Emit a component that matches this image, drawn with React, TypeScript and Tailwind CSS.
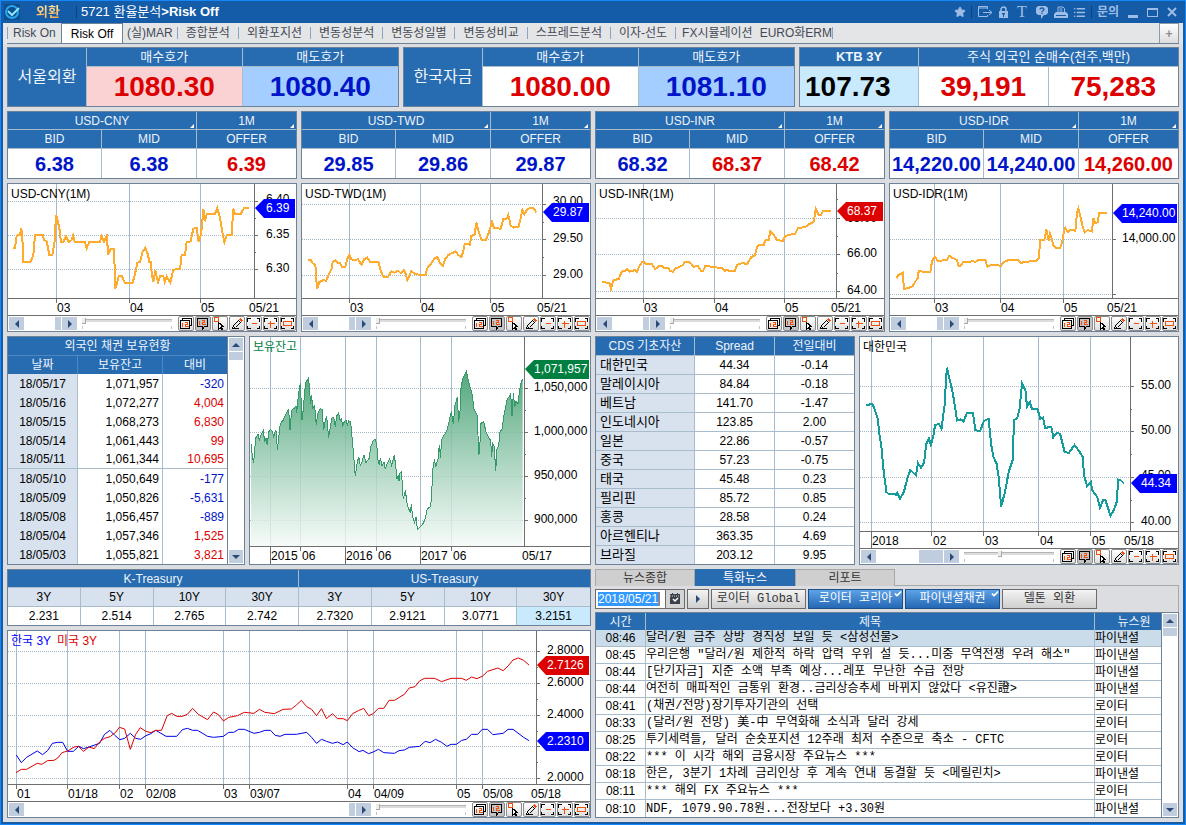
import { ReactNode } from "react";
import clsx from "clsx";
import { Check, List, Star } from "lucide-react";

type Tone = "up" | "down" | "flat";

type Tag = { text: string; y: number; color: string };

type ChartProps = {
  width: number;
  height: number;
  axisX: number;
  axisY: number;
  vLines: number[];
  yearLines?: number[];
  hLines: number[];
  minor?: number[];
  labelX: number;
  yLabels: [string, number][];
  xLabels: [string, number][];
  tags: Tag[];
  label: string;
  children: ReactNode;
};

const toneText = {
  up: "text-[#dc0000]",
  down: "text-[#0014c8]",
  flat: "text-black",
};

const menuTabs = [
  "(실)MAR",
  "종합분석",
  "외환포지션",
  "변동성분석",
  "변동성일별",
  "변동성비교",
  "스프레드분석",
  "이자-선도",
];

const quotes: { pair: string; cells: [string, Tone][] }[] = [
  { pair: "USD-CNY", cells: [["6.38", "down"], ["6.38", "down"], ["6.39", "up"]] },
  { pair: "USD-TWD", cells: [["29.85", "down"], ["29.86", "down"], ["29.87", "down"]] },
  { pair: "USD-INR", cells: [["68.32", "down"], ["68.37", "up"], ["68.42", "up"]] },
  { pair: "USD-IDR", cells: [["14,220.00", "down"], ["14,240.00", "down"], ["14,260.00", "up"]] },
];

const fxCharts = [
  {
    name: "USD-CNY(1M)",
    shift: 8,
    axisX: 246,
    vLines: [48, 121, 192],
    hLines: [17, 51, 85],
    minor: [34, 68],
    labelX: 258,
    yLabels: [["6.40", 15], ["6.35", 50], ["6.30", 84]] as [string, number][],
    tag: { text: "6.39", y: 24, color: "#0000ff" },
    points:
      "40,421 45,421 50,383 60,380 64,362 67,380 69,461 92,461 100,440 105,381 128,381 133,397 140,400 148,440 157,440 164,400 168,320 172,335 178,360 183,402 190,402 198,384 206,402 214,397 219,382 224,402 255,402 260,420 268,402 300,402 304,384 312,400 320,384 325,440 332,422 342,422 346,543 356,505 366,505 374,524 398,524 405,498 412,464 420,462 428,430 436,420 444,440 448,462 453,462 455,495 460,522 466,488 474,522 480,505 490,505 494,522 500,505 511,524 520,485 540,483 545,441 555,441 560,402 572,400 580,362 590,360 596,402 602,382 606,355 610,302 615,340 620,318 645,318 652,300 660,330 668,378 673,402 680,382 695,380 700,302 706,318 722,318 732,300 747,300",
  },
  {
    name: "USD-TWD(1M)",
    shift: 6,
    axisX: 240,
    vLines: [47, 118, 188],
    hLines: [20, 55, 91],
    minor: [38, 73],
    labelX: 251,
    yLabels: [["30.00", 17], ["29.50", 54], ["29.00", 90]] as [string, number][],
    tag: { text: "29.87", y: 28, color: "#0000ff" },
    points:
      "36,456 44,456 50,466 58,470 60,500 63,543 70,522 82,516 90,519 98,500 106,485 110,462 118,458 124,464 132,464 138,477 148,477 154,452 160,440 166,454 175,457 186,454 196,470 205,453 214,449 222,461 248,463 254,488 262,506 276,506 286,490 296,494 306,488 314,495 324,486 330,500 334,516 346,489 358,499 388,501 395,478 405,467 415,452 424,447 432,465 440,474 448,452 456,442 464,437 470,435 478,430 486,440 496,447 502,430 506,408 522,410 526,384 536,380 541,344 548,370 556,395 570,396 578,375 588,342 594,360 614,362 622,333 632,332 637,321 644,352 652,359 668,356 674,330 679,306 685,318 695,303 708,299 714,303 721,313",
  },
  {
    name: "USD-INR(1M)",
    shift: 4,
    axisX: 240,
    vLines: [47, 118, 188],
    hLines: [34, 70, 107],
    minor: [15, 52, 89],
    labelX: 251,
    yLabels: [["68.00", 34], ["66.00", 69], ["64.00", 106]] as [string, number][],
    tag: { text: "68.37", y: 27, color: "#dc0000" },
    points:
      "30,522 52,525 57,542 64,517 80,513 86,498 92,489 100,489 105,483 112,491 122,489 128,485 135,491 142,475 150,463 156,461 162,467 180,469 190,483 200,475 210,473 218,481 228,479 235,490 243,491 250,481 262,477 272,471 280,461 290,461 298,467 305,476 318,474 328,490 334,488 340,474 366,477 390,481 398,489 405,485 412,489 428,489 436,470 448,466 466,467 478,447 488,443 496,415 502,410 515,411 520,397 530,396 535,369 545,380 555,396 572,399 580,384 595,380 610,377 618,360 640,357 652,348 664,343 668,325 671,302 680,321 688,320 693,309 716,309",
  },
  {
    name: "USD-IDR(1M)",
    shift: 4,
    axisX: 222,
    vLines: [44, 110, 173],
    hLines: [55, 110],
    minor: [],
    labelX: 232,
    yLabels: [["14,000.00", 54]] as [string, number][],
    tag: { text: "14,240.00", y: 29, color: "#0000ff" },
    points:
      "32,511 36,502 50,495 54,543 66,540 80,535 88,520 95,512 98,490 104,488 110,492 133,492 138,460 146,446 155,458 182,457 190,443 198,449 213,456 218,474 224,473 232,462 262,460 268,462 276,457 298,456 304,476 316,471 345,473 352,463 368,456 395,456 404,465 420,461 440,460 450,458 458,450 463,397 475,395 481,365 488,398 492,378 498,395 502,411 510,420 522,420 528,405 534,370 538,359 545,372 552,366 568,368 573,315 577,302 583,325 590,355 596,374 605,366 618,370 622,330 628,345 635,343 640,314 662,314",
  },
];

const holdings: [string, string, string][] = [
  ["18/05/17", "1,071,957", "-320"],
  ["18/05/16", "1,072,277", "4,004"],
  ["18/05/15", "1,068,273", "6,830"],
  ["18/05/14", "1,061,443", "99"],
  ["18/05/11", "1,061,344", "10,695"],
  ["18/05/10", "1,050,649", "-177"],
  ["18/05/09", "1,050,826", "-5,631"],
  ["18/05/08", "1,056,457", "-889"],
  ["18/05/04", "1,057,346", "1,525"],
  ["18/05/03", "1,055,821", "3,821"],
];

const holdingPoints =
  "33,336 38,380 41,392 47,318 54,306 58,325 62,312 70,296 74,330 78,318 82,340 86,300 92,292 98,300 101,318 106,295 109,298 112,355 118,300 121,275 130,264 138,245 146,232 150,295 155,235 163,228 168,222 170,243 175,190 181,153 186,265 190,230 194,180 197,152 206,137 209,180 212,215 215,190 218,228 224,222 229,280 233,245 240,230 246,232 251,295 256,265 260,253 266,317 270,290 276,258 281,256 286,285 290,252 296,243 301,268 304,258 308,280 314,268 318,265 322,280 326,267 332,270 338,335 342,385 346,433 350,400 356,374 361,400 366,390 372,368 378,392 387,380 392,345 400,325 405,321 410,335 414,385 418,400 421,378 426,403 432,390 436,412 440,398 449,380 455,400 463,370 467,400 471,440 475,430 477,446 480,422 485,418 487,470 490,502 496,475 502,520 508,535 511,540 514,517 518,555 524,572 528,555 532,592 541,585 550,573 556,560 562,530 570,525 574,505 578,420 580,395 584,385 587,405 594,380 598,340 602,378 604,325 612,310 620,298 628,265 634,238 640,275 645,220 652,196 656,270 660,240 663,170 668,140 679,118 686,150 690,165 696,185 702,230 712,250 716,368 719,360 722,275 731,268 738,300 745,315 752,325 755,375 758,335 763,345 767,418 771,352 776,340 780,300 787,290 790,260 795,235 802,200 808,193 812,183 816,253 820,183 824,225 828,208 834,215 838,180 843,152 848,141";

const cds: [string, string, string][] = [
  ["대한민국", "44.34", "-0.14"],
  ["말레이시아", "84.84", "-0.18"],
  ["베트남", "141.70", "-1.47"],
  ["인도네시아", "123.85", "2.00"],
  ["일본", "22.86", "-0.57"],
  ["중국", "57.23", "-0.75"],
  ["태국", "45.48", "0.23"],
  ["필리핀", "85.72", "0.85"],
  ["홍콩", "28.58", "0.24"],
  ["아르헨티나", "363.35", "4.69"],
  ["브라질", "203.12", "9.95"],
];

const cdsPoints =
  "726,219 733,219 738,216 744,217 750,235 757,260 762,310 767,345 773,420 780,480 785,485 805,488 808,482 816,500 826,480 835,440 843,414 858,430 863,393 871,407 879,393 885,335 892,320 897,338 903,315 908,280 918,275 925,290 933,220 939,107 946,140 955,185 966,265 975,262 983,268 992,242 1008,243 1014,295 1027,297 1036,268 1049,260 1056,340 1062,375 1070,395 1076,440 1082,524 1092,480 1102,420 1112,385 1116,265 1124,258 1130,235 1137,155 1146,175 1150,224 1158,210 1163,231 1178,232 1185,260 1192,257 1198,288 1214,284 1219,316 1228,303 1237,305 1249,360 1260,363 1275,339 1287,357 1297,375 1300,430 1308,462 1318,450 1322,475 1335,495 1342,528 1350,505 1356,503 1370,552 1380,530 1386,510 1390,443 1398,446 1405,454";

const treasury: [string, string][] = [
  ["3Y", "2.231"],
  ["5Y", "2.514"],
  ["10Y", "2.765"],
  ["30Y", "2.742"],
  ["3Y", "2.7320"],
  ["5Y", "2.9121"],
  ["10Y", "3.0771"],
  ["30Y", "3.2151"],
];

const usPoints =
  "42,620 56,610 70,610 98,592 110,595 125,584 142,583 152,576 163,560 178,555 195,543 206,541 220,556 234,543 248,548 262,528 275,517 290,512 305,498 314,484 328,489 343,550 357,505 369,485 384,496 397,500 410,493 425,493 440,449 452,442 465,451 480,451 493,445 507,427 522,445 546,461 562,438 575,446 588,465 602,454 625,449 643,439 668,442 683,430 697,439 722,443 745,430 767,429 780,417 793,403 807,422 820,430 833,449 846,428 859,458 875,443 888,458 903,458 914,464 928,443 943,434 957,427 970,449 982,443 996,427 1010,427 1024,403 1038,403 1064,385 1077,366 1092,362 1104,345 1117,337 1144,337 1162,347 1187,337 1215,337 1227,343 1241,333 1255,338 1269,331 1283,316 1310,306 1324,314 1337,300 1350,282 1364,276 1378,283 1392,297";

const krPoints =
  "43,567 56,590 70,574 98,555 112,566 125,554 138,532 152,529 165,529 178,556 193,556 207,541 220,548 234,543 262,532 275,505 289,493 302,508 315,521 328,517 343,502 357,517 370,520 384,509 397,503 410,493 437,511 465,511 480,491 493,487 507,493 520,493 546,511 562,514 588,511 602,499 615,499 628,490 643,490 668,502 683,499 697,493 712,493 724,508 737,511 750,505 780,505 807,499 820,514 833,532 846,520 859,526 875,532 888,528 903,536 914,528 928,545 945,557 955,553 970,563 982,558 996,550 1010,560 1038,562 1050,554 1064,552 1077,544 1104,541 1119,526 1132,530 1146,520 1162,529 1176,541 1187,535 1201,535 1215,523 1227,520 1241,505 1257,505 1269,490 1283,490 1297,506 1324,502 1337,490 1350,490 1378,514 1392,524";

const news: [string, string, string][] = [
  ["08:46", "달러/원 금주 상방 경직성 보일 듯 <삼성선물>", "파이낸셜"],
  ["08:45", '우리은행 "달러/원 제한적 하락 압력 우위 설 듯...미중 무역전쟁 우려 해소"', "파이낸셜"],
  ["08:44", "[단기자금] 지준 소액 부족 예상...레포 무난한 수급 전망", "파이낸셜"],
  ["08:44", "여전히 매파적인 금통위 환경..금리상승추세 바뀌지 않았다 <유진證>", "파이낸셜"],
  ["08:41", "(채권/전망)장기투자기관의 선택", "로이터"],
  ["08:33", "(달러/원 전망) 美-中 무역화해 소식과 달러 강세", "로이터"],
  ["08:25", "투기세력들, 달러 순숏포지션 12주래 최저 수준으로 축소 - CFTC", "로이터"],
  ["08:22", "*** 이 시각 해외 금융시장 주요뉴스 ***", "로이터"],
  ["08:18", "한은, 3분기 1차례 금리인상 후 계속 연내 동결할 듯 <메릴린치>", "파이낸셜"],
  ["08:11", "*** 해외 FX 주요뉴스 ***", "로이터"],
  ["08:10", "NDF, 1079.90.78원...전장보다 +3.30원", "파이낸셜"],
];

function Panel({ children }: { children: ReactNode }) {
  return (
    <section className="min-w-0 border border-[#6c8298] bg-white">{children}</section>
  );
}

function Chart(props: ChartProps) {
  const { width, height, axisX, axisY, labelX } = props;

  return (
    <svg
      viewBox={`0 0 ${width} ${height}`}
      className="block w-full"
      role="img"
      aria-label={props.label}
      fontSize={12}
      fill="#000"
    >
      <g stroke="#a6b9ca" shapeRendering="crispEdges">
        {props.hLines.map((y) => (
          <line key={y} x1={0} x2={axisX} y1={y + 0.5} y2={y + 0.5} strokeDasharray="1 1" />
        ))}
        {props.vLines.map((x) => (
          <line key={x} x1={x + 0.5} x2={x + 0.5} y1={0} y2={axisY} />
        ))}
      </g>

      {props.children}

      <g stroke="#6e6e6e" shapeRendering="crispEdges">
        <line x1={axisX + 0.5} x2={axisX + 0.5} y1={0} y2={axisY} />
        <line x1={0} x2={width} y1={axisY + 0.5} y2={axisY + 0.5} />
        {props.hLines.map((y) => (
          <line key={y} x1={axisX} x2={axisX + 4} y1={y + 0.5} y2={y + 0.5} />
        ))}
        {props.minor?.map((y) => (
          <line key={y} x1={axisX} x2={axisX + 2} y1={y + 0.5} y2={y + 0.5} />
        ))}
        {props.vLines.map((x) => (
          <line key={x} x1={x + 0.5} x2={x + 0.5} y1={axisY} y2={axisY + 5} />
        ))}
        {props.yearLines?.map((x) => (
          <line key={x} x1={x + 0.5} x2={x + 0.5} y1={axisY} y2={height} />
        ))}
      </g>

      {props.yLabels.map(([text, y]) => (
        <text key={text} x={labelX} y={y + 4}>
          {text}
        </text>
      ))}
      {props.xLabels.map(([text, x]) => (
        <text key={x} x={x} y={axisY + 14}>
          {text}
        </text>
      ))}
      {props.tags.map((tag) => (
        <g key={tag.text}>
          <polygon
            fill={tag.color}
            points={`${axisX + 1},${tag.y} ${axisX + 10},${tag.y - 9} ${width - 1},${tag.y - 9} ${width - 1},${tag.y + 10} ${axisX + 10},${tag.y + 10}`}
          />
          <text x={labelX} y={tag.y + 4} fill="#fff">
            {tag.text}
          </text>
        </g>
      ))}
    </svg>
  );
}

const corners = "M0 4V1h3M9 1h3v3M12 8v3H9M3 11H0V8";

const tools = [
  {
    name: "겹쳐보기",
    icon: (
      <>
        <path d="M3 3V1h9v7h-2" stroke="#000" />
        <path d="M1 3h9v8H1z" stroke="#000" />
        <path d="M3 5v4M5 5h3v2H6v2h3" stroke="#f0500a" />
      </>
    ),
  },
  {
    name: "값 표시",
    icon: (
      <>
        <path d="M1 1h10v8H8l-2 3v-3H1z" stroke="#000" />
        <path d="M3 3v4M5 3h3v2H6v2h3" stroke="#f0500a" />
      </>
    ),
  },
  {
    name: "선택",
    icon: (
      <>
        <path d="M1 0h4v4H1z" stroke="#f0500a" />
        <path d="M5 5v7l2-2 1 2h1l-1-3h2z" fill="#fff" stroke="#000" />
      </>
    ),
  },
  {
    name: "그리기",
    icon: (
      <>
        <path d="M3 8l5-5 2 2-5 5-3 1zM1 11h7" stroke="#000" />
        <path d="M9 2l1-1 2 2-1 1z" fill="#f0500a" stroke="#f0500a" />
      </>
    ),
  },
  {
    name: "축소",
    icon: (
      <>
        <path d={corners} stroke="#000" />
        <path d="M4 6h5" stroke="#f0500a" />
      </>
    ),
  },
  {
    name: "확대",
    icon: (
      <>
        <path d={corners} stroke="#000" />
        <path d="M3 6h7M6 3v7" stroke="#f0500a" />
      </>
    ),
  },
  {
    name: "전체",
    icon: (
      <>
        <path d={corners} stroke="#000" />
        <path d="M2 4h8v4H2z" stroke="#f0500a" />
      </>
    ),
  },
];

function Arrow({ d }: { d: string }) {
  return (
    <svg viewBox="0 0 8 8" className="h-2 w-2">
      <path d={d} fill="#2c4a78" />
    </svg>
  );
}

const scrollBox = "flex shrink-0 items-center justify-center bg-[#c0cddf]";

function ChartToolbar({ wide, zoom = 0 }: { wide?: boolean; zoom?: number }) {
  return (
    <div className="flex h-4 items-center border-t border-[#6e6e6e] bg-white pl-px">
      <div className="flex flex-1 gap-px">
        <button aria-label="이전" className={clsx(scrollBox, "h-[13px] w-[15px]")}>
          <Arrow d="M6 0v8L2 4z" />
        </button>
        <div className={clsx("ml-auto bg-[#c0cddf]", wide ? "w-6" : "w-[6px]")} />
        <button aria-label="다음" className={clsx(scrollBox, "h-[13px] w-[15px]")}>
          <Arrow d="M2 0v8l4-4z" />
        </button>
      </div>
      <div className="ml-[5px] flex w-[90px] flex-col gap-1">
        <input
          type="range"
          aria-label="차트 배율"
          defaultValue={zoom}
          className="h-[3px] w-full appearance-none border-t border-[#b4b4b4] bg-[#dcdcdc] [&::-webkit-slider-thumb]:h-[6px] [&::-webkit-slider-thumb]:w-1 [&::-webkit-slider-thumb]:appearance-none [&::-webkit-slider-thumb]:border-r [&::-webkit-slider-thumb]:border-b [&::-webkit-slider-thumb]:border-[#a8a8a8] [&::-webkit-slider-thumb]:bg-[#ececec]"
        />
        <div className="h-[3px] border-x border-[#c4c4c4]" />
      </div>
      <div className="ml-[6px] flex gap-px">
        {tools.map((tool, i) => (
          <button
            key={tool.name}
            aria-label={tool.name}
            className={clsx(
              "flex h-[15px] w-4 items-center justify-center rounded-xs border border-[#8c8c8c]",
              i === 1 ? "bg-[#c4c4c4]" : "bg-linear-to-b from-white to-[#dedede]"
            )}
          >
            <svg
              viewBox="-0.5 -0.5 14 13"
              className="h-[13px] w-[14px]"
              fill="none"
              shapeRendering="crispEdges"
            >
              {tool.icon}
            </svg>
          </button>
        ))}
      </div>
    </div>
  );
}

function VerticalScroll() {
  return (
    <div className="flex w-[17px] shrink-0 flex-col gap-px border-l border-[#6c8298] bg-white p-px">
      <button aria-label="위로" className={clsx(scrollBox, "h-[13px]")}>
        <Arrow d="M0 6h8L4 2z" />
      </button>
      <div className="h-2 bg-[#c0cddf]" />
      <button aria-label="아래로" className={clsx(scrollBox, "mt-auto h-[13px]")}>
        <Arrow d="M0 2h8L4 6z" />
      </button>
    </div>
  );
}

function TitleBar() {
  return (
    <header className="flex h-[22px] items-center bg-[#145ca8] px-px text-white">
      <svg viewBox="0 0 16 16" className="h-4 w-4">
        <rect width="16" height="16" fill="#0a4f8f" />
        <circle cx="8" cy="8" r="6" fill="none" stroke="#2ba4ec" strokeWidth="2" />
        <path d="M4 7l4 4 7-7" fill="none" stroke="#8fe6ff" strokeWidth="2" />
      </svg>
      <span className="ml-4 bg-linear-to-b from-[#fff0a8] to-[#ff9c38] bg-clip-text text-[13px] font-bold text-transparent">
        외환
      </span>
      <span className="ml-4 h-3 w-px bg-[#0c3f7c]" />
      <h1 className="ml-1 text-[13px]">
        5721 환율분석<b>&gt;Risk Off</b>
      </h1>
      <div className="mr-[5px] ml-auto flex items-center gap-[5px] text-[#9dbce6]">
        <button aria-label="즐겨찾기">
          <Star size={12} fill="currentColor" />
        </button>
        <span className="h-3 w-px bg-[#0c3f7c]" />
        <button aria-label="내보내기">
          <svg viewBox="0 0 16 12" className="h-3 w-4" fill="none" stroke="currentColor">
            <path d="M10.5 3V.5h-9v10h9V9M1.5 2h9M6 6.5h8M12 4l3 2.5L12 9" />
          </svg>
        </button>
        <button aria-label="잠금">
          <svg viewBox="0 0 11 12" className="h-3 w-[11px]">
            <path d="M3 6V3.500a2.500 2.500 0 015 0V6" fill="none" stroke="currentColor" strokeWidth="1.500" />
            <rect x="1" y="5" width="9" height="7" fill="currentColor" />
            <path d="M4 7h3v1.500H6V11H5V8.500H4z" fill="#145ca8" />
          </svg>
        </button>
        <button className="w-4 font-[Liberation_Serif,serif] text-[16px] leading-4">T</button>
        <button aria-label="도움말">
          <svg viewBox="0 0 14 13" className="h-[13px] w-[14px]">
            <path d="M3 0h8l2 2v5l-2 2H9l-3 4V9H3L1 7V2z" fill="currentColor" />
            <path d="M5 3.500C5 1.500 9 1.500 9 3.500 9 4.500 7 4.500 7 6M7 6.800V8" fill="none" stroke="#145ca8" strokeWidth="1.300" />
          </svg>
        </button>
        <button aria-label="인쇄">
          <svg viewBox="0 0 14 13" className="h-[13px] w-[14px]">
            <path d="M4 6V1h5l1.500 1.500V6" fill="none" stroke="currentColor" />
            <path d="M5.500 3h3M5.500 5h3" stroke="currentColor" />
            <path d="M2 6h10l2 2v4H0V8z" fill="currentColor" />
            <path d="M2 9.500h10" stroke="#145ca8" />
          </svg>
        </button>
        <button aria-label="목록">
          <List size={13} strokeWidth={3} />
        </button>
        <span className="h-3 w-px bg-[#0c3f7c]" />
        <button className="text-[12px] font-bold">문의</button>
        <button aria-label="최소화" className="ml-1 flex h-3 w-[10px] items-end">
          <span className="h-[3px] w-full bg-current" />
        </button>
        <button
          aria-label="최대화"
          className="ml-1 h-[9px] w-[11px] border border-t-2 border-current"
        />
        <button aria-label="닫기" className="ml-1">
          <svg viewBox="0 0 10 10" className="h-[10px] w-[10px]">
            <path d="M1 1l8 8M9 1l-8 8" stroke="currentColor" strokeWidth="2" />
          </svg>
        </button>
      </div>
    </header>
  );
}

function MenuTabs() {
  return (
    <nav className="mx-1 flex h-[21px] items-center border-b border-[#6c8298] text-[12px] text-[#444a55]">
      <button className="w-[54px] border-l border-[#8ea2c4] pl-[5px] text-left leading-3">
        Risk On
      </button>
      <button className="h-full w-[62px] border border-b-0 border-[#6c8298] bg-white text-black">
        Risk Off
      </button>
      {menuTabs.map((tab, i) => (
        <button
          key={tab}
          className={clsx(
            "border-r border-[#8ea2c4] leading-3 whitespace-nowrap",
            i === 0 ? "px-1" : "px-2"
          )}
        >
          {tab}
        </button>
      ))}
      <button className="pl-[6px] leading-3 whitespace-nowrap">FX시뮬레이션</button>
      <button className="border-r border-[#8ea2c4] pl-[7px] leading-3 whitespace-nowrap">
        EURO화ERM
      </button>
      <button className="ml-auto h-full w-5 border border-b-0 border-[#8c9aa8] bg-linear-to-b from-white to-[#dcdcdc] font-bold text-[#8c8c8c]">
        +
      </button>
    </nav>
  );
}

const headCell = "border-[#a8bccc] bg-[#276bb1] font-normal text-[#eef4fb]";

function SpotPanel({ name, bid, ask, tint }: { name: string; bid: string; ask: string; tint?: boolean }) {
  return (
    <Panel>
      <table className="w-full table-fixed border-separate border-spacing-0 text-center">
        <colgroup>
          <col className="w-[79px]" />
          <col />
          <col />
        </colgroup>
        <tbody>
          <tr>
            <th rowSpan={2} className={clsx(headCell, "border-r text-[16px]")}>
              {name}
            </th>
            <th className={clsx(headCell, "h-[19px] border-r border-b text-[13px] leading-4")}>
              매수호가
            </th>
            <th className={clsx(headCell, "h-[19px] border-b text-[13px] leading-4")}>매도호가</th>
          </tr>
          <tr className="text-[28px] leading-8 font-bold">
            <td
              className={clsx(
                "h-[39px] border-r border-[#a8bccc] text-[#dc0000]",
                tint && "bg-[#fad2d4]"
              )}
            >
              {bid}
            </td>
            <td className="bg-[#a3ceff] text-[#0014c8]">{ask}</td>
          </tr>
        </tbody>
      </table>
    </Panel>
  );
}

function StockPanel() {
  return (
    <Panel>
      <table className="w-full table-fixed border-separate border-spacing-0 text-center">
        <colgroup>
          <col className="w-[119px]" />
          <col />
          <col />
        </colgroup>
        <thead>
          <tr className="text-[13px] leading-4">
            <th className={clsx(headCell, "h-[19px] border-r border-b")}>
              <b>KTB 3Y</b>
            </th>
            <th colSpan={2} className={clsx(headCell, "border-b")}>
              주식 외국인 순매수(천주,백만)
            </th>
          </tr>
        </thead>
        <tbody>
          <tr className="text-[28px] leading-8 font-bold text-[#dc0000]">
            <td className="h-[39px] border-r border-[#a8bccc] bg-[#c8eafc] pl-[5px] text-left text-black">
              107.73
            </td>
            <td className="border-r border-[#a8bccc]">39,191</td>
            <td>75,283</td>
          </tr>
        </tbody>
      </table>
    </Panel>
  );
}

function PickerCell({ label, value }: { label: string; value: string }) {
  return (
    <div className="relative">
      <select
        aria-label={label}
        className="block h-[17px] w-full appearance-none text-center leading-4"
        defaultValue={value}
      >
        <option>{value}</option>
      </select>
      <svg viewBox="0 0 4 4" className="pointer-events-none absolute right-[2px] bottom-px h-1 w-1">
        <path d="M4 0v4H0z" fill="#fff" />
      </svg>
    </div>
  );
}

function QuotePanel({ pair, cells }: { pair: string; cells: [string, Tone][] }) {
  return (
    <Panel>
      <table className="w-full table-fixed border-separate border-spacing-0 text-center text-[12px] leading-4">
        <colgroup>
          <col className="w-[94px]" />
          <col className="w-[95px]" />
          <col />
        </colgroup>
        <thead>
          <tr>
            <th colSpan={2} className={clsx(headCell, "h-[18px] border-r border-b")}>
              <PickerCell label="통화쌍" value={pair} />
            </th>
            <th className={clsx(headCell, "border-b")}>
              <PickerCell label="만기" value="1M" />
            </th>
          </tr>
          <tr>
            <th className={clsx(headCell, "h-[19px] border-r border-b")}>BID</th>
            <th className={clsx(headCell, "border-r border-b")}>MID</th>
            <th className={clsx(headCell, "border-b")}>OFFER</th>
          </tr>
        </thead>
        <tbody>
          <tr className="text-[20px] leading-6 font-bold">
            {cells.map(([value, tone], i) => (
              <td
                key={i}
                className={clsx("h-[29px] border-[#a8bccc]", i < 2 && "border-r", toneText[tone])}
              >
                {value}
              </td>
            ))}
          </tr>
        </tbody>
      </table>
    </Panel>
  );
}

function HoldingsTable() {
  return (
    <Panel>
      <div className="flex">
        <table className="min-w-0 flex-1 table-fixed border-separate border-spacing-0 text-[12px] leading-4">
          <colgroup>
            <col className="w-[70px]" />
            <col className="w-[85px]" />
            <col />
          </colgroup>
          <thead>
            <tr>
              <th
                colSpan={3}
                className="h-[19px] border-b border-[#4c88c4] bg-[#276bb1] font-normal text-[#eef4fb]"
              >
                외국인 채권 보유현황
              </th>
            </tr>
            <tr className="bg-[#276bb1] text-[#eef4fb]">
              <th className="h-[18px] border-r border-[#4c88c4] font-normal">날짜</th>
              <th className="border-r border-[#4c88c4] font-normal">보유잔고</th>
              <th className="font-normal">대비</th>
            </tr>
          </thead>
          <tbody>
            {holdings.map(([date, amount, diff], i) => (
              <tr key={date} className={clsx(i === 4 && "[&>td]:border-b")}>
                <td className="h-[19px] border-r border-[#a8bccc] bg-[#d7e2ee] text-center">
                  {date}
                </td>
                <td className="border-r border-[#a8bccc] pr-[3px] text-right">{amount}</td>
                <td
                  className={clsx(
                    "border-[#a8bccc] pr-[3px] text-right",
                    diff.startsWith("-") ? toneText.down : toneText.up
                  )}
                >
                  {diff}
                </td>
              </tr>
            ))}
          </tbody>
        </table>
        <VerticalScroll />
      </div>
    </Panel>
  );
}

function HoldingsChart() {
  return (
    <Panel>
      <Chart
        label="보유잔고"
        width={340}
        height={227}
        axisX={274}
        axisY={209}
        vLines={[20, 50, 95, 126, 170, 201]}
        yearLines={[20, 95, 170]}
        hLines={[51, 95, 139, 183]}
        minor={[73, 117, 161]}
        labelX={284}
        yLabels={[
          ["1,050,000", 50],
          ["1,000,000", 94],
          ["950,000", 138],
          ["900,000", 182],
        ]}
        xLabels={[
          ["2015", 21],
          ["06", 52],
          ["2016", 96],
          ["06", 128],
          ["2017", 171],
          ["06", 203],
          ["05/17", 272],
        ]}
        tags={[{ text: "1,071,957", y: 32, color: "#008040" }]}
      >
        <defs>
          <linearGradient id="holding" gradientUnits="userSpaceOnUse" x1="0" y1="110" x2="0" y2="642">
            <stop offset="0" stopColor="#3c9c6c" stopOpacity="0.9" />
            <stop offset="1" stopColor="#f4faf7" stopOpacity="0.8" />
          </linearGradient>
        </defs>
        <g transform="translate(-10 -5) scale(0.33333)">
          <polygon points={`33,642 ${holdingPoints} 848,642`} fill="url(#holding)" />
          <polyline
            points={holdingPoints}
            fill="none"
            stroke="#35996a"
            vectorEffect="non-scaling-stroke"
            shapeRendering="crispEdges"
          />
        </g>
        <text x={3} y={14} fill="#008040">
          보유잔고
        </text>
      </Chart>
    </Panel>
  );
}

function CdsTable() {
  return (
    <Panel>
      <table className="w-full table-fixed border-separate border-spacing-0 text-center text-[12px] leading-4">
        <colgroup>
          <col className="w-[99px]" />
          <col className="w-[80px]" />
          <col />
        </colgroup>
        <thead>
          <tr>
            <th className={clsx(headCell, "h-[19px] border-r border-b")}>CDS 기초자산</th>
            <th className={clsx(headCell, "border-r border-b")}>Spread</th>
            <th className={clsx(headCell, "border-b")}>전일대비</th>
          </tr>
        </thead>
        <tbody>
          {cds.map(([name, spread, diff], i) => {
            const line = i < cds.length - 1 ? "h-[19px] border-b" : "h-[18px]";
            return (
              <tr key={name} className="[&>*]:border-[#a8bccc]">
                <th
                  className={clsx(
                    line,
                    "border-r bg-[#d7e2ee] pl-1 text-left text-[13px] font-normal"
                  )}
                >
                  {name}
                </th>
                <td className={clsx(line, "border-r")}>{spread}</td>
                <td className={line}>{diff}</td>
              </tr>
            );
          })}
        </tbody>
      </table>
    </Panel>
  );
}

function CdsChart() {
  return (
    <Panel>
      <Chart
        label="대한민국 CDS"
        width={318}
        height={211}
        axisX={270}
        axisY={194}
        vLines={[11, 71, 123, 178, 230]}
        yearLines={[11]}
        hLines={[49, 94, 140, 185]}
        minor={[72, 117, 163]}
        labelX={281}
        yLabels={[
          ["55.00", 48],
          ["50.00", 93],
          ["45.00", 138],
          ["40.00", 184],
        ]}
        xLabels={[
          ["2018", 12],
          ["02", 73],
          ["03", 125],
          ["04", 180],
          ["05", 232],
          ["05/18", 264],
        ]}
        tags={[{ text: "44.34", y: 146, color: "#0000ff" }]}
      >
        <polyline
          transform="translate(-270 -5) scale(0.38 0.33333)"
          points={cdsPoints}
          fill="none"
          stroke="#149b9b"
          strokeWidth={2}
          vectorEffect="non-scaling-stroke"
          shapeRendering="crispEdges"
        />
        <text x={3} y={14}>
          대한민국
        </text>
      </Chart>
      <ChartToolbar wide zoom={40} />
    </Panel>
  );
}

function TreasuryTable() {
  return (
    <Panel>
      <table className="w-full table-fixed border-separate border-spacing-0 text-center text-[12px] leading-4">
        <thead>
          <tr>
            <th colSpan={4} className={clsx(headCell, "h-[18px] border-r border-b")}>
              K-Treasury
            </th>
            <th colSpan={4} className={clsx(headCell, "border-b")}>
              US-Treasury
            </th>
          </tr>
          <tr>
            {treasury.map(([term], i) => (
              <th
                key={i}
                className={clsx(
                  "h-[19px] border-b border-[#a8bccc] bg-[#d7e2ee] font-normal",
                  i < 7 && "border-r"
                )}
              >
                {term}
              </th>
            ))}
          </tr>
        </thead>
        <tbody>
          <tr>
            {treasury.map(([, rate], i) => (
              <td
                key={i}
                className={clsx("h-[18px] border-[#a8bccc]", i < 7 ? "border-r" : "bg-[#c8eafc]")}
              >
                {rate}
              </td>
            ))}
          </tr>
        </tbody>
      </table>
    </Panel>
  );
}

function TreasuryChart() {
  return (
    <Panel>
      <Chart
        label="한국 3Y, 미국 3Y"
        width={582}
        height={170}
        axisX={528}
        axisY={153}
        vLines={[8, 59, 111, 137, 215, 241, 339, 365, 448, 474]}
        hLines={[20, 52, 84, 115, 147]}
        minor={[36, 68, 100, 131]}
        labelX={539}
        yLabels={[
          ["2.8000", 19],
          ["2.6000", 51],
          ["2.4000", 83],
          ["2.0000", 146],
        ]}
        xLabels={[
          ["01", 9],
          ["01/18", 60],
          ["02", 112],
          ["02/08", 138],
          ["03", 216],
          ["03/07", 242],
          ["04", 340],
          ["04/09", 366],
          ["05", 449],
          ["05/08", 475],
          ["05/18", 523],
        ]}
        tags={[
          { text: "2.7126", y: 34, color: "#dc0000" },
          { text: "2.2310", y: 110, color: "#0000ff" },
        ]}
      >
        <g
          transform="translate(-8 -65) scale(0.38 0.33333)"
          fill="none"
          shapeRendering="crispEdges"
        >
          <polyline points={krPoints} stroke="#0000e6" vectorEffect="non-scaling-stroke" />
          <polyline points={usPoints} stroke="#dc0000" vectorEffect="non-scaling-stroke" />
        </g>
        <text x={3} y={14} fill="#0000ff">
          한국 3Y
        </text>
        <text x={49} y={14} fill="#dc0000">
          미국 3Y
        </text>
      </Chart>
      <ChartToolbar />
    </Panel>
  );
}

const sourceButton = "relative h-5 w-[95px] border font-[Liberation_Mono,Noto_Sans_CJK_KR,monospace]";

function SourceButton({ name, active }: { name: string; active?: boolean }) {
  return (
    <button
      aria-pressed={!!active}
      className={clsx(
        sourceButton,
        active
          ? "border-[#1c4f86] bg-linear-to-b from-[#5ea2e8] to-[#2468b4] text-white"
          : "border-[#6c6c6c] bg-linear-to-b from-[#f4f4f4] to-[#cfcfcf] text-[#333]"
      )}
    >
      {name}
      {active && <Check size={8} strokeWidth={5} className="absolute top-0 right-0" />}
    </button>
  );
}

function NewsPanel() {
  return (
    <section className="flex min-w-0 flex-col text-[12px] leading-4">
      <div className="flex h-[17px]">
        <button className="w-[100px] border border-b-0 border-[#a8a8a8] bg-[#cfcfcf] text-[#333]">
          뉴스종합
        </button>
        <button className="w-[100px] bg-[#276bb1] text-white">특화뉴스</button>
        <button className="w-[100px] border border-b-0 border-[#a8a8a8] bg-[#cfcfcf] text-[#333]">
          리포트
        </button>
        <div className="flex-1 border-b border-[#a8a8a8]" />
      </div>

      <div className="flex h-[26px] items-center gap-[2px] border-r border-[#a8a8a8]">
        <div className="flex h-5 w-[90px] items-center border border-[#6c6c6c] bg-white pl-[2px]">
          <input
            aria-label="조회일"
            defaultValue="2018/05/21"
            className="h-[14px] w-[62px] border-r border-[#e07020] bg-[#3399ff] text-white outline-none"
          />
          <button
            aria-label="달력"
            className="ml-auto flex h-full w-[19px] items-center justify-center border-l border-[#6c6c6c] bg-[#d4d4d4]"
          >
            <svg viewBox="0 0 12 12" className="h-3 w-3">
              <path d="M1 1h10v10H1zM3 0h1v2H3zM8 0h1v2H8z" fill="#3a3f48" />
              <path d="M1 3h10" stroke="#d4d4d4" strokeDasharray="1 1" />
              <path d="M4 6l2 2 3-3" fill="none" stroke="#fff" strokeWidth="1.500" />
            </svg>
          </button>
        </div>
        <button
          aria-label="조회"
          className="flex h-5 w-[22px] items-center justify-center border border-[#6c6c6c] bg-linear-to-b from-[#f4f4f4] to-[#cfcfcf]"
        >
          <Arrow d="M2 0v8l4-4z" />
        </button>
        <SourceButton name="로이터 Global" />
        <SourceButton name="로이터 코리아" active />
        <SourceButton name="파이낸셜채권" active />
        <SourceButton name="델톤 외환" />
      </div>

      <div className="flex flex-1 border border-[#6c8298]">
        <table className="min-w-0 flex-1 table-fixed border-separate border-spacing-0 bg-white">
          <colgroup>
            <col className="w-[50px]" />
            <col />
            <col className="w-[66px]" />
          </colgroup>
          <thead>
            <tr>
              <th className={clsx(headCell, "h-[17px] border-r")}>시간</th>
              <th className={clsx(headCell, "border-r")}>제목</th>
              <th className={clsx(headCell, "pl-3")}>뉴스원</th>
            </tr>
          </thead>
          <tbody>
            {news.map(([time, title, source], i) => (
              <tr
                key={i}
                className={clsx(
                  "[&>td]:h-[17px] [&>td]:border-[#a8bccc]",
                  i === 0 && "bg-[#cadcea]",
                  i < news.length - 1 && "[&>td]:border-b"
                )}
              >
                <td className="border-r text-center">{time}</td>
                <td className="overflow-hidden border-r font-[Liberation_Mono,Noto_Sans_CJK_KR,monospace] whitespace-nowrap">
                  {title}
                </td>
                <td className="whitespace-nowrap">{source}</td>
              </tr>
            ))}
          </tbody>
        </table>
        <VerticalScroll />
      </div>
    </section>
  );
}

export default function App() {
  return (
    <div className="border border-[#1488f8] bg-[#145ca8] px-[2px] pb-[2px] font-[Liberation_Sans,Noto_Sans_CJK_KR,sans-serif] text-black">
      <TitleBar />
      <div className="bg-[#e4e5e7]">
        <MenuTabs />
      </div>

      <main className="flex flex-col gap-1 bg-[#dcdde1] px-1 pt-[3px] pb-1">
        <div className="grid grid-cols-[minmax(0,392fr)_minmax(0,392fr)_minmax(0,380fr)] gap-1">
          <SpotPanel name="서울외환" bid="1080.30" ask="1080.40" tint />
          <SpotPanel name="한국자금" bid="1080.00" ask="1081.10" />
          <StockPanel />
        </div>

        <div className="grid grid-cols-4 gap-1">
          {quotes.map((q) => (
            <QuotePanel key={q.pair} pair={q.pair} cells={q.cells} />
          ))}
        </div>

        <div className="grid grid-cols-4 gap-1">
          {fxCharts.map((c) => (
            <Panel key={c.name}>
              <Chart
                label={c.name}
                width={288}
                height={131}
                axisX={c.axisX}
                axisY={114}
                vLines={c.vLines}
                hLines={c.hLines}
                minor={c.minor}
                labelX={c.labelX}
                yLabels={c.yLabels}
                xLabels={[
                  ["03", c.vLines[0] + 1],
                  ["04", c.vLines[1] + 1],
                  ["05", c.vLines[2] + 1],
                  ["05/21", c.axisX - 5],
                ]}
                tags={[c.tag]}
              >
                <polyline
                  transform={`translate(${-c.shift} -76) scale(0.33333)`}
                  points={c.points}
                  fill="none"
                  stroke="#ffab2e"
                  strokeWidth={2}
                  vectorEffect="non-scaling-stroke"
                  shapeRendering="crispEdges"
                />
                <text x={3} y={14}>
                  {c.name}
                </text>
              </Chart>
              <ChartToolbar />
            </Panel>
          ))}
        </div>

        <div className="grid grid-cols-[minmax(0,238fr)_minmax(0,342fr)_minmax(0,260fr)_minmax(0,320fr)] gap-1">
          <HoldingsTable />
          <HoldingsChart />
          <CdsTable />
          <CdsChart />
        </div>

        <div className="grid grid-cols-2 gap-1">
          <div className="flex min-w-0 flex-col gap-1">
            <TreasuryTable />
            <TreasuryChart />
          </div>
          <NewsPanel />
        </div>
      </main>
    </div>
  );
}
